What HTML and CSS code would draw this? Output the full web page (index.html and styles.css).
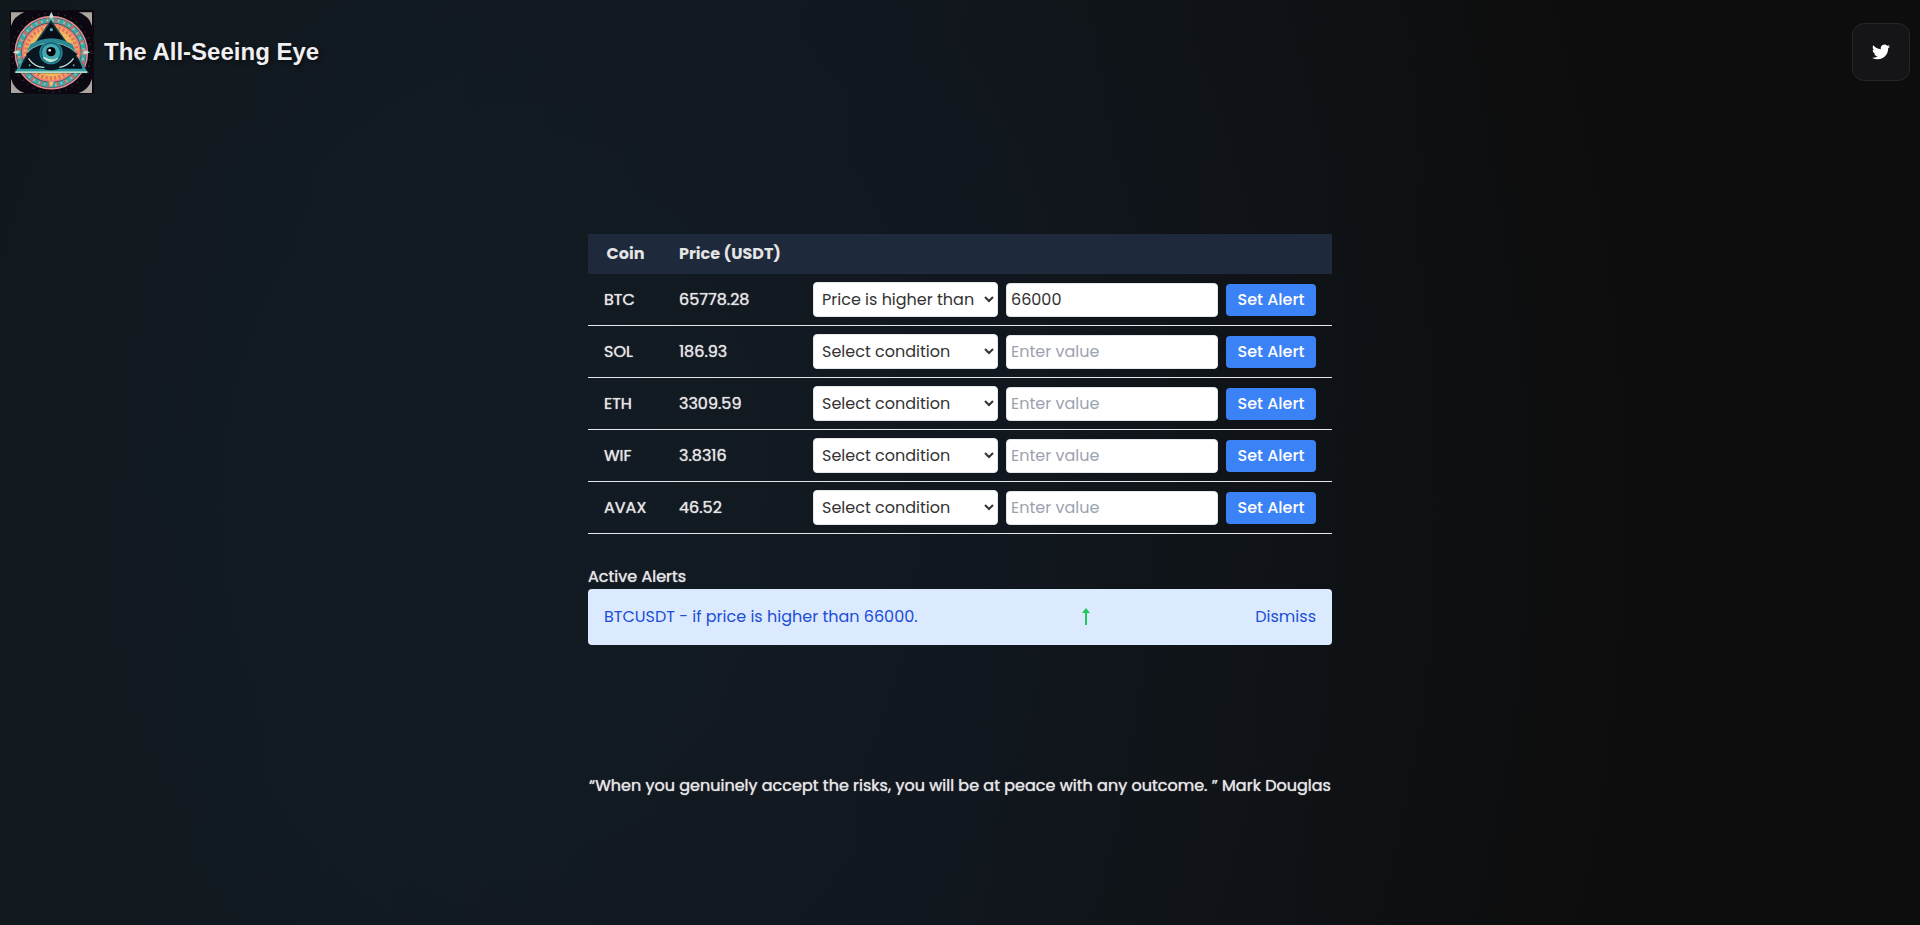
FILE: index.html
```html
<!DOCTYPE html>
<html lang="en">
<head>
<meta charset="utf-8">
<meta name="viewport" content="width=device-width, initial-scale=1">
<title>The All-Seeing Eye</title>
<link rel="stylesheet" href="styles.css">
</head>
<body>
<header class="site-header">
  <div class="brand">
    <svg class="brand-logo" viewBox="0 0 252 252" role="img" aria-label="Eye inside a triangle">
      <rect width="252" height="252" fill="#0b0812"/>
      <g fill="#aaa69f">
        <path d="M3 7H43Q12 18 3 48Z"/><path d="M246 7H206Q237 18 246 48Z"/>
        <path d="M3 249H43Q12 238 3 206Z"/><path d="M246 249H206Q237 238 246 206Z"/>
      </g>
      <g fill="none" stroke-dasharray="3 17" stroke-width="4">
        <circle cx="124" cy="128" r="119" stroke="#4c3944"/>
      </g>
      <circle cx="124" cy="128" r="108" fill="#16383f" stroke="#e58b90" stroke-width="5"/>
      <circle cx="124" cy="128" r="97" fill="none" stroke="#3fa5a5" stroke-width="15"/>
      <circle cx="124" cy="128" r="97" fill="none" stroke="#d5685c" stroke-width="13" stroke-dasharray="7 19"/>
      <circle cx="124" cy="128" r="97" fill="none" stroke="#8bc9b4" stroke-width="7" stroke-dasharray="5 12"/>
      <circle cx="124" cy="128" r="86" fill="#edaa5a" stroke="#e97879" stroke-width="5"/>
      <circle cx="124" cy="128" r="76" fill="none" stroke="#e86d66" stroke-width="12" stroke-dasharray="6 7"/>
      <circle cx="124" cy="128" r="64" fill="none" stroke="#f4bd63" stroke-width="13" stroke-dasharray="9 3"/>
      <path d="M124 6l7 14-7 8-7-8ZM8 127l14-6 8 6-8 6ZM240 127l-14-6-8 6 8 6Z" fill="#bfe0cf"/>
      <path d="M123 34L16 187H233Z" fill="#090d18" stroke="#133b46" stroke-width="5"/>
      <path d="M44 139L17 185H231L204 139L218 176H30Z" fill="#2d9ca5"/>
      <path d="M16 184H232V189H16Z" fill="#b5dac5"/>
      <path d="M61 103Q124 66 187 103L198 126Q124 70 50 126Z" fill="#2c8794"/>
      <path d="M50 126Q124 70 198 126" fill="none" stroke="#75b9b5" stroke-width="3"/>
      <path d="M48 132Q124 74 202 132Q166 181 123 181Q80 181 48 132Z" fill="#071621"/>
      <circle cx="123" cy="128" r="35" fill="#268897"/>
      <circle cx="123" cy="128" r="29" fill="#43a8af" stroke="#176376" stroke-width="4"/>
      <path d="M100 142Q121 166 143 145Q130 157 100 142Z" fill="#d4efde" stroke="#b9e3d5" stroke-width="4"/>
      <circle cx="123" cy="125" r="14" fill="#03070d"/>
      <circle cx="119" cy="121" r="4" fill="#fff"/>
      <path d="M55 145Q74 172 103 172M191 145Q174 168 148 172" fill="none" stroke="#c3e1d5" stroke-width="4"/>
      <g fill="#4bb0b2"><circle cx="124" cy="59" r="5"/><circle cx="59" cy="166" r="3"/><circle cx="191" cy="166" r="3"/></g>
      <path d="M116 215l8 16 8-16Z" fill="#f0bd75"/>
    </svg>
    <h1 class="brand-name">The All-Seeing Eye</h1>
  </div>
  <a class="social-link" href="#" aria-label="Twitter">
    <svg class="social-icon" viewBox="0 0 24 24" aria-hidden="true"><path fill="currentColor" d="M23.953 4.57a10 10 0 0 1-2.825.775 4.958 4.958 0 0 0 2.163-2.723 9.99 9.99 0 0 1-3.127 1.184 4.92 4.92 0 0 0-8.384 4.482C7.69 8.095 4.067 6.13 1.64 3.162a4.822 4.822 0 0 0-.666 2.475c0 1.71.87 3.213 2.188 4.096a4.904 4.904 0 0 1-2.228-.616v.06a4.923 4.923 0 0 0 3.946 4.827 4.996 4.996 0 0 1-2.212.085 4.936 4.936 0 0 0 4.604 3.417 9.867 9.867 0 0 1-6.102 2.105c-.39 0-.779-.023-1.17-.067a13.995 13.995 0 0 0 7.557 2.209c9.053 0 13.998-7.496 13.998-13.985 0-.21 0-.42-.015-.63A9.935 9.935 0 0 0 24 4.59z"/></svg>
  </a>
</header>
<main class="content">
  <table class="coins">
    <thead>
      <tr><th class="col-coin" scope="col">Coin</th><th class="col-price" scope="col">Price (USDT)</th><td></td></tr>
    </thead>
    <tbody>
      <tr><td>BTC</td><td>65778.28</td><td><form class="alert-form">
        <select class="condition" aria-label="BTC condition"><option>Select condition</option><option selected>Price is higher than</option><option>Price is lower than</option></select>
        <input class="value" type="text" aria-label="BTC value" placeholder="Enter value" value="66000">
        <button class="set-alert" type="button">Set Alert</button></form></td></tr>
      <tr><td>SOL</td><td>186.93</td><td><form class="alert-form">
        <select class="condition" aria-label="SOL condition"><option>Select condition</option><option>Price is higher than</option><option>Price is lower than</option></select>
        <input class="value" type="text" aria-label="SOL value" placeholder="Enter value">
        <button class="set-alert" type="button">Set Alert</button></form></td></tr>
      <tr><td>ETH</td><td>3309.59</td><td><form class="alert-form">
        <select class="condition" aria-label="ETH condition"><option>Select condition</option><option>Price is higher than</option><option>Price is lower than</option></select>
        <input class="value" type="text" aria-label="ETH value" placeholder="Enter value">
        <button class="set-alert" type="button">Set Alert</button></form></td></tr>
      <tr><td>WIF</td><td>3.8316</td><td><form class="alert-form">
        <select class="condition" aria-label="WIF condition"><option>Select condition</option><option>Price is higher than</option><option>Price is lower than</option></select>
        <input class="value" type="text" aria-label="WIF value" placeholder="Enter value">
        <button class="set-alert" type="button">Set Alert</button></form></td></tr>
      <tr><td>AVAX</td><td>46.52</td><td><form class="alert-form">
        <select class="condition" aria-label="AVAX condition"><option>Select condition</option><option>Price is higher than</option><option>Price is lower than</option></select>
        <input class="value" type="text" aria-label="AVAX value" placeholder="Enter value">
        <button class="set-alert" type="button">Set Alert</button></form></td></tr>
    </tbody>
  </table>
  <section class="alerts">
    <h2 class="alerts-title">Active Alerts</h2>
    <div class="alert">
      <span>BTCUSDT - if price is higher than 66000.</span>
      <svg class="arrow-up" viewBox="0 0 10 18" aria-hidden="true"><path d="M5 0L9 5H6V17H4V5H1Z" fill="currentColor"/></svg>
      <button class="dismiss" type="button">Dismiss</button>
    </div>
  </section>
  <p class="quote">“When you genuinely accept the risks, you will be at peace with any outcome. ” Mark Douglas</p>
</main>
</body>
</html>
```

FILE: styles.css
```css
* { box-sizing: border-box; }

body {
  margin: 0;
  min-height: 100vh;
  background:
    radial-gradient(ellipse 60% 160% at 28% 55%, rgba(18, 27, 36, 0.9) 0%, rgba(18, 25, 34, 0.8) 35%, rgba(13, 13, 13, 0) 95%),
    linear-gradient(95deg, #0f1817 0%, #101c1c 20%, #0f1316 45%, #0d0d0d 75%);
  color: #e5e5e5;
  font: 400 16px/24px Poppins, Inter, "Noto Sans", sans-serif;
  text-shadow: 0 0 1px currentColor;
}

h1, h2, p { margin: 0; }

.site-header {
  display: flex;
  align-items: center;
  justify-content: space-between;
  padding: 10px;
}

.brand { display: flex; align-items: center; gap: 10px; }
.brand-logo { width: 84px; height: 84px; }
.brand-name {
  color: #f1eff1;
  font: 700 24px/32px "Liberation Sans", Arial, sans-serif;
  text-shadow: 2px 2px 4px rgba(0, 0, 0, 0.5);
}

.social-link {
  display: grid;
  place-items: center;
  width: 58px;
  height: 58px;
  border: 1px solid #262628;
  border-radius: 12px;
  background: #151517;
  color: #fff;
}
.social-icon { width: 18px; height: 18px; }

.content {
  width: min(744px, 100%);
  margin: 0 auto;
  padding-top: 130px;
}

.coins { width: 100%; border-collapse: separate; border-spacing: 0; }
.coins thead { background: #1e293b; }
.coins th, .coins td { padding: 8px 16px; }
.coins th { font-weight: 700; text-shadow: none; white-space: nowrap; }
.coins tbody td { border-bottom: 1px solid #e5e7eb; vertical-align: middle; }
.col-coin { width: 75px; }
.col-price { width: 134px; }

.alert-form { display: flex; align-items: center; gap: 8px; }
.condition, .value, .set-alert, .dismiss { border: 0; font: inherit; }
.condition, .value {
  border: 1px solid #e5e7eb;
  border-radius: 4px;
  background: #fff;
  color: #333;
}
.condition { width: 185px; height: 35px; padding: 4px; }
.value { flex: 1; width: 0; min-width: 0; height: 34px; padding: 4px; }
.value::placeholder { color: #9ca3af; }
.set-alert {
  width: 90px;
  height: 32px;
  padding: 4px 8px;
  border-radius: 4px;
  background: #3b82f6;
  color: #fff;
  font-weight: 500;
  white-space: nowrap;
}

.alerts { margin-top: 31px; }
.alert {
  display: flex;
  align-items: center;
  justify-content: space-between;
  padding: 16px;
  border-radius: 4px;
  background: #dbeafe;
  color: #1d4ed8;
  text-shadow: none;
}
.alerts-title { font: inherit; }
.arrow-up { width: 10px; height: 18px; color: #22c55e; }
.dismiss { padding: 0; background: none; color: #1d4ed8; }

.quote { margin-top: 129px; text-align: center; }
```
